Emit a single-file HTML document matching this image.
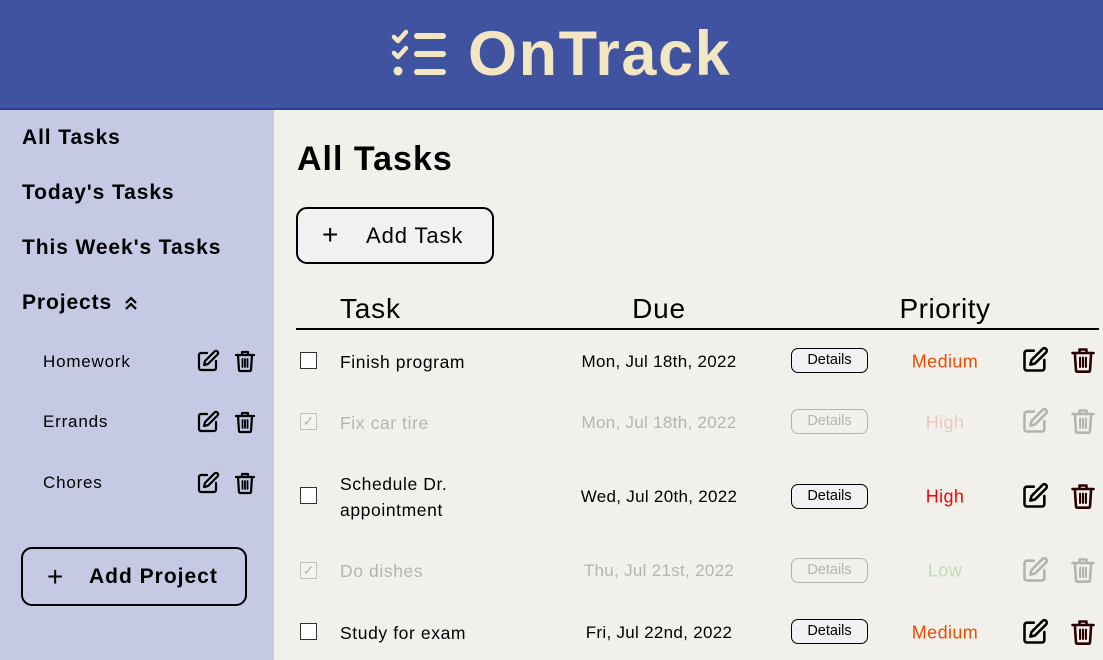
<!DOCTYPE html>
<html><head><meta charset="utf-8"><style>
*{margin:0;padding:0;box-sizing:border-box}
body{width:1103px;height:660px;overflow:hidden;background:#f1f0eb;font-family:"Liberation Sans",sans-serif;color:#000;position:relative}
.a{position:absolute;white-space:nowrap}
header{position:absolute;left:0;top:0;width:1103px;height:110px;background:#3f53a0;border-bottom:2px solid #2b3f8f}
.logo{left:468px;top:18px;font-size:63px;font-weight:bold;color:#f2e6c3;letter-spacing:1.6px}
aside{position:absolute;left:0;top:110px;width:274px;height:550px;background:#c5c9e3}
.nav{left:22px;font-size:21px;font-weight:bold;transform:translateY(-50%);letter-spacing:.9px;margin-top:1px}
.proj{left:43px;font-size:17px;transform:translateY(-50%);letter-spacing:.8px;margin-top:1px}
.btn{border:2px solid #000;border-radius:11px}
.cb{left:300px;width:17px;height:17px;border:1.5px solid #333;background:#fff}
.t{left:340px;font-size:17.5px;transform:translateY(-50%);line-height:26px;letter-spacing:.6px;margin-top:1px}
.d{left:559px;width:200px;text-align:center;font-size:17px;transform:translateY(-50%);letter-spacing:.3px;margin-top:1px}
.det{left:791px;width:77px;height:25px;border:1.5px solid #000;border-radius:7px;font-size:14.5px;text-align:center;line-height:22px;background:#f1f1f3}
.p{left:885px;width:120px;text-align:center;font-size:18px;transform:translateY(-50%);letter-spacing:.4px;margin-top:1px}
.fade{opacity:.25}
</style></head><body>
<header>
<svg class="a" style="left:390px;top:28px" width="58" height="52" viewBox="0 0 58 52" fill="none" stroke="#f2e6c3" stroke-linecap="round" stroke-linejoin="round">
<path d="M4 9l4 4 8-9" stroke-width="4.5"/><path d="M4 25l4 4 8-9" stroke-width="4.5"/><circle cx="8" cy="43" r="4.5" fill="#f2e6c3" stroke="none"/>
<path d="M27 8h26M27 26h26M27 44h26" stroke-width="6"/></svg>
<div class="a logo">OnTrack</div>
</header>
<aside></aside>
<div class="a nav" style="top:137px">All Tasks</div>
<div class="a nav" style="top:192px">Today's Tasks</div>
<div class="a nav" style="top:247px">This Week's Tasks</div>
<div class="a nav" style="top:302px">Projects</div>
<svg class="a" style="left:124px;top:295px" width="14" height="16" viewBox="0 0 14 16" fill="none" stroke="#000" stroke-width="2.2"><path d="M2 8l5-5 5 5M2 14l5-5 5 5"/></svg>

<div class="a proj" style="top:361px">Homework</div>
<div class="a proj" style="top:421px">Errands</div>
<div class="a proj" style="top:482px">Chores</div>

<div class="a btn" style="left:21px;top:547px;width:226px;height:59px"></div>
<div class="a" style="left:47px;top:561px;font-size:28px;font-weight:300">+</div>
<div class="a" style="left:89px;top:565px;font-size:21px;font-weight:bold;letter-spacing:1px">Add Project</div>

<div class="a" style="left:297px;top:140px;font-size:34px;font-weight:bold;letter-spacing:1px">All Tasks</div>
<div class="a btn" style="left:296px;top:207px;width:198px;height:57px;background:#f1f1f3"></div>
<div class="a" style="left:322px;top:219px;font-size:28px;font-weight:300">+</div>
<div class="a" style="left:366px;top:223px;font-size:22px;letter-spacing:.9px">Add Task</div>

<div class="a" style="left:340px;top:293px;font-size:28px;letter-spacing:.8px">Task</div>
<div class="a" style="left:559px;width:200px;text-align:center;top:293px;font-size:28px;letter-spacing:.8px">Due</div>
<div class="a" style="left:865px;width:160px;text-align:center;top:293px;font-size:28px;letter-spacing:.5px">Priority</div>
<div class="a" style="left:296px;top:328px;width:803px;height:1.5px;background:#000"></div>

<div class="a cb" style="top:352px"></div>
<div class="a t" style="top:361px">Finish program</div>
<div class="a d" style="top:361px">Mon, Jul 18th, 2022</div>
<div class="a det" style="top:348px">Details</div>
<div class="a p" style="top:361px;color:#f04a00">Medium</div>
<div class="fade">
<div class="a cb" style="top:413px;font-size:14px;line-height:14px;text-align:center">&#10003;</div>
<div class="a t" style="top:422px">Fix car tire</div>
<div class="a d" style="top:422px">Mon, Jul 18th, 2022</div>
<div class="a det" style="top:409px">Details</div>
<div class="a p" style="top:422px;color:#f04a3a">High</div>
</div>
<div class="a cb" style="top:487px"></div>
<div class="a t" style="top:496px">Schedule Dr.<br>appointment</div>
<div class="a d" style="top:496px">Wed, Jul 20th, 2022</div>
<div class="a det" style="top:484px">Details</div>
<div class="a p" style="top:496px;color:#f00">High</div>
<div class="fade">
<div class="a cb" style="top:562px;font-size:14px;line-height:14px;text-align:center">&#10003;</div>
<div class="a t" style="top:570px">Do dishes</div>
<div class="a d" style="top:570px">Thu, Jul 21st, 2022</div>
<div class="a det" style="top:558px">Details</div>
<div class="a p" style="top:570px;color:#2a9a2a">Low</div>
</div>
<div class="a cb" style="top:623px"></div>
<div class="a t" style="top:632px">Study for exam</div>
<div class="a d" style="top:632px">Fri, Jul 22nd, 2022</div>
<div class="a det" style="top:619px">Details</div>
<div class="a p" style="top:632px;color:#f04a00">Medium</div>

<svg width="0" height="0" style="position:absolute"><defs>
<g id="ed" fill="none" stroke-linecap="round" stroke-linejoin="round" stroke-width="2.2"><path d="M11 4H5a2 2 0 0 0-2 2v13a2 2 0 0 0 2 2h13a2 2 0 0 0 2-2v-7"/><path d="M18.5 2.5a2.1 2.1 0 0 1 3 3L12 15l-4 1 1-4z"/></g>
<g id="tr" fill="none" stroke-linecap="round" stroke-linejoin="round" stroke-width="2.2"><path d="M3 6h18M9 6V3h6v3M5 6l1 15a1 1 0 0 0 1 1h10a1 1 0 0 0 1-1l1-15"/><path d="M9.5 10v8M12 10v8M14.5 10v8" stroke-width="1.8"/></g>
</defs></svg>

<svg class="a" style="left:196px;top:349px" width="24" height="24" viewBox="0 0 24 24" stroke="#000"><use href="#ed"/></svg>
<svg class="a" style="left:233px;top:349px" width="24" height="24" viewBox="0 0 24 24" stroke="#000"><use href="#tr"/></svg>
<svg class="a" style="left:196px;top:410px" width="24" height="24" viewBox="0 0 24 24" stroke="#000"><use href="#ed"/></svg>
<svg class="a" style="left:233px;top:410px" width="24" height="24" viewBox="0 0 24 24" stroke="#000"><use href="#tr"/></svg>
<svg class="a" style="left:196px;top:471px" width="24" height="24" viewBox="0 0 24 24" stroke="#000"><use href="#ed"/></svg>
<svg class="a" style="left:233px;top:471px" width="24" height="24" viewBox="0 0 24 24" stroke="#000"><use href="#tr"/></svg>

<svg class="a" style="left:1021px;top:346px" width="28" height="28" viewBox="0 0 24 24" stroke="#000"><use href="#ed"/></svg>
<svg class="a" style="left:1069px;top:346px" width="28" height="28" viewBox="0 0 24 24" stroke="#2a0000"><use href="#tr"/></svg>
<svg class="a" style="left:1021px;top:407px;opacity:.25" width="28" height="28" viewBox="0 0 24 24" stroke="#000"><use href="#ed"/></svg>
<svg class="a" style="left:1069px;top:407px;opacity:.25" width="28" height="28" viewBox="0 0 24 24" stroke="#000"><use href="#tr"/></svg>
<svg class="a" style="left:1021px;top:482px" width="28" height="28" viewBox="0 0 24 24" stroke="#000"><use href="#ed"/></svg>
<svg class="a" style="left:1069px;top:482px" width="28" height="28" viewBox="0 0 24 24" stroke="#2a0000"><use href="#tr"/></svg>
<svg class="a" style="left:1021px;top:556px;opacity:.25" width="28" height="28" viewBox="0 0 24 24" stroke="#000"><use href="#ed"/></svg>
<svg class="a" style="left:1069px;top:556px;opacity:.25" width="28" height="28" viewBox="0 0 24 24" stroke="#000"><use href="#tr"/></svg>
<svg class="a" style="left:1021px;top:618px" width="28" height="28" viewBox="0 0 24 24" stroke="#000"><use href="#ed"/></svg>
<svg class="a" style="left:1069px;top:618px" width="28" height="28" viewBox="0 0 24 24" stroke="#2a0000"><use href="#tr"/></svg>
</body></html>
